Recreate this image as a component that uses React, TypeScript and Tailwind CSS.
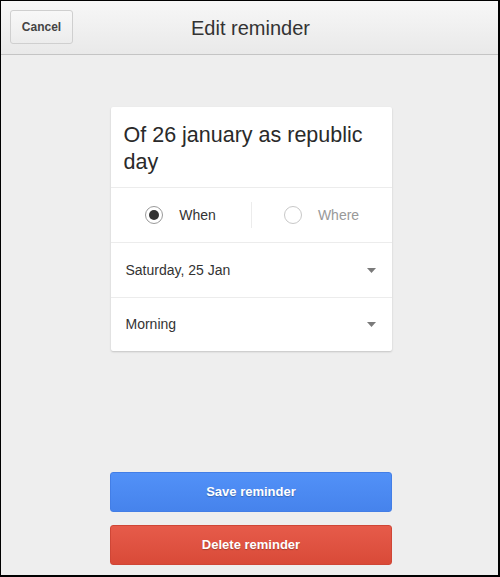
export default function App() {
  return (
    <div
      className="w-[500px] h-[577px] flex flex-col bg-[#eeeeee] border-l border-t border-r-2 border-b-2 border-black overflow-hidden"
      style={{ fontFamily: '"Liberation Sans", Arial, sans-serif' }}
    >
      {/* Header */}
      <div className="relative h-[54px] shrink-0 flex items-center justify-center border-b border-[#c4c4c4] bg-gradient-to-b from-[#f7f7f7] to-[#e9e9e9]">
        <button className="absolute left-[9px] top-[9px] w-[63px] h-[34px] rounded-[3px] border border-[#cfcfcf] bg-gradient-to-b from-[#f8f8f8] to-[#ececec] text-[12px] font-bold text-[#444]">
          Cancel
        </button>
        <h1 className="text-[20px] text-[#333] ml-[2px]">Edit reminder</h1>
      </div>

      {/* Body */}
      <div className="flex-1 flex flex-col items-center pt-[52px] pb-[10px]">
        <div className="w-[281px] ml-[3px] bg-white rounded-[2px] shadow-[0_1px_2px_rgba(0,0,0,0.18)]">
          <div className="px-[13px] pt-[15px] pb-[11px] text-[21.5px] leading-[27px] text-[#2a2a2a] border-b border-[#ececec]">
            Of 26 january as republic day
          </div>

          <div className="h-[55px] flex items-center border-b border-[#ececec]">
            <div className="flex-1 flex items-center justify-center gap-[16px]">
              <span className="w-[18px] h-[18px] rounded-full border-[1.5px] border-[#9a9a9a] flex items-center justify-center">
                <span className="w-[10px] h-[10px] rounded-full bg-[#333]" />
              </span>
              <span className="text-[14px] text-[#333]">When</span>
            </div>
            <div className="w-px h-[26px] bg-[#ececec]" />
            <div className="flex-1 flex items-center justify-center gap-[16px]">
              <span className="w-[18px] h-[18px] rounded-full border-[1.5px] border-[#c8c8c8]" />
              <span className="text-[14px] text-[#999]">Where</span>
            </div>
          </div>

          <div className="h-[55px] flex items-center justify-between px-[15px] border-b border-[#ececec]">
            <span className="text-[14px] text-[#333]">Saturday, 25 Jan</span>
            <svg width="9" height="5" viewBox="0 0 9 5" className="mr-[1px]">
              <path d="M0 0h9L4.5 5z" fill="#7a7a7a" />
            </svg>
          </div>

          <div className="h-[53px] flex items-center justify-between px-[15px]">
            <span className="text-[14px] text-[#333]">Morning</span>
            <svg width="9" height="5" viewBox="0 0 9 5" className="mr-[1px]">
              <path d="M0 0h9L4.5 5z" fill="#7a7a7a" />
            </svg>
          </div>
        </div>

        <div className="flex-1" />

        <div className="w-[282px] ml-[3px] flex flex-col gap-[13px]">
          <button className="h-[40px] rounded-[3px] border border-[#437ee6] bg-gradient-to-b from-[#5291f8] to-[#4683ec] text-white text-[13px] font-bold [text-shadow:0_1px_1px_rgba(0,0,0,0.25)]">
            Save reminder
          </button>
          <button className="h-[40px] rounded-[3px] border border-[#cf4636] bg-gradient-to-b from-[#e65b4a] to-[#d94a38] text-white text-[13px] font-bold [text-shadow:0_1px_1px_rgba(0,0,0,0.25)]">
            Delete reminder
          </button>
        </div>
      </div>
    </div>
  );
}
